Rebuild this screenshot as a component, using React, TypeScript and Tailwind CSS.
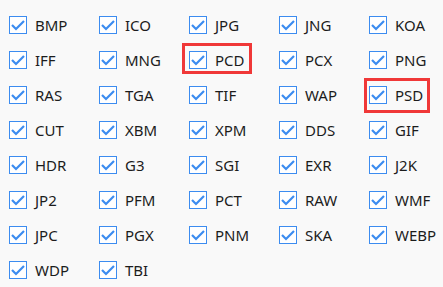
import React from "react";

const formats = [
    "BMP", "ICO", "JPG", "JNG", "KOA",
    "IFF", "MNG", "PCD", "PCX", "PNG",
    "RAS", "TGA", "TIF", "WAP", "PSD",
    "CUT", "XBM", "XPM", "DDS", "GIF",
    "HDR", "G3", "SGI", "EXR", "J2K",
    "JP2", "PFM", "PCT", "RAW", "WMF",
    "JPC", "PGX", "PNM", "SKA", "WEBP",
    "WDP", "TBI",
];

function CheckBox() {
    return (
        <span className="flex items-center justify-center w-[18px] h-[18px] border border-[#3c8cf0] bg-white shrink-0">
            <svg width="16" height="16" viewBox="0 0 16 16" fill="none">
                <polyline points="2,8 6,12 14,4" stroke="#3c8cf0" strokeWidth="2.2" />
            </svg>
        </span>
    );
}

function FormatItem({ name }: { name: string }) {
    return (
        <div className="relative flex items-center gap-[8px] h-[18px]">
            <CheckBox />
            <span className="text-[15px] leading-none text-[#1c1c1c]">{name}</span>
            {name === "PCD" && (
                <span className="absolute left-[-7px] top-[-8px] w-[70px] h-[31px] border-[3px] border-[#f03838]" />
            )}
            {name === "PSD" && (
                <span className="absolute left-[-5px] top-[-8px] w-[66px] h-[35px] border-[3px] border-[#f03838]" />
            )}
        </div>
    );
}

export default function App() {
    return (
        <div
            className="w-[443px] h-[287px] bg-[#f9f9f9] overflow-hidden"
            style={{ fontFamily: '"Noto Sans", "Open Sans", sans-serif' }}
        >
            <div className="grid grid-cols-[repeat(5,90px)] gap-y-[17px] pl-[9px] pt-[16px]">
                {formats.map((f) => (
                    <FormatItem key={f} name={f} />
                ))}
            </div>
        </div>
    );
}
